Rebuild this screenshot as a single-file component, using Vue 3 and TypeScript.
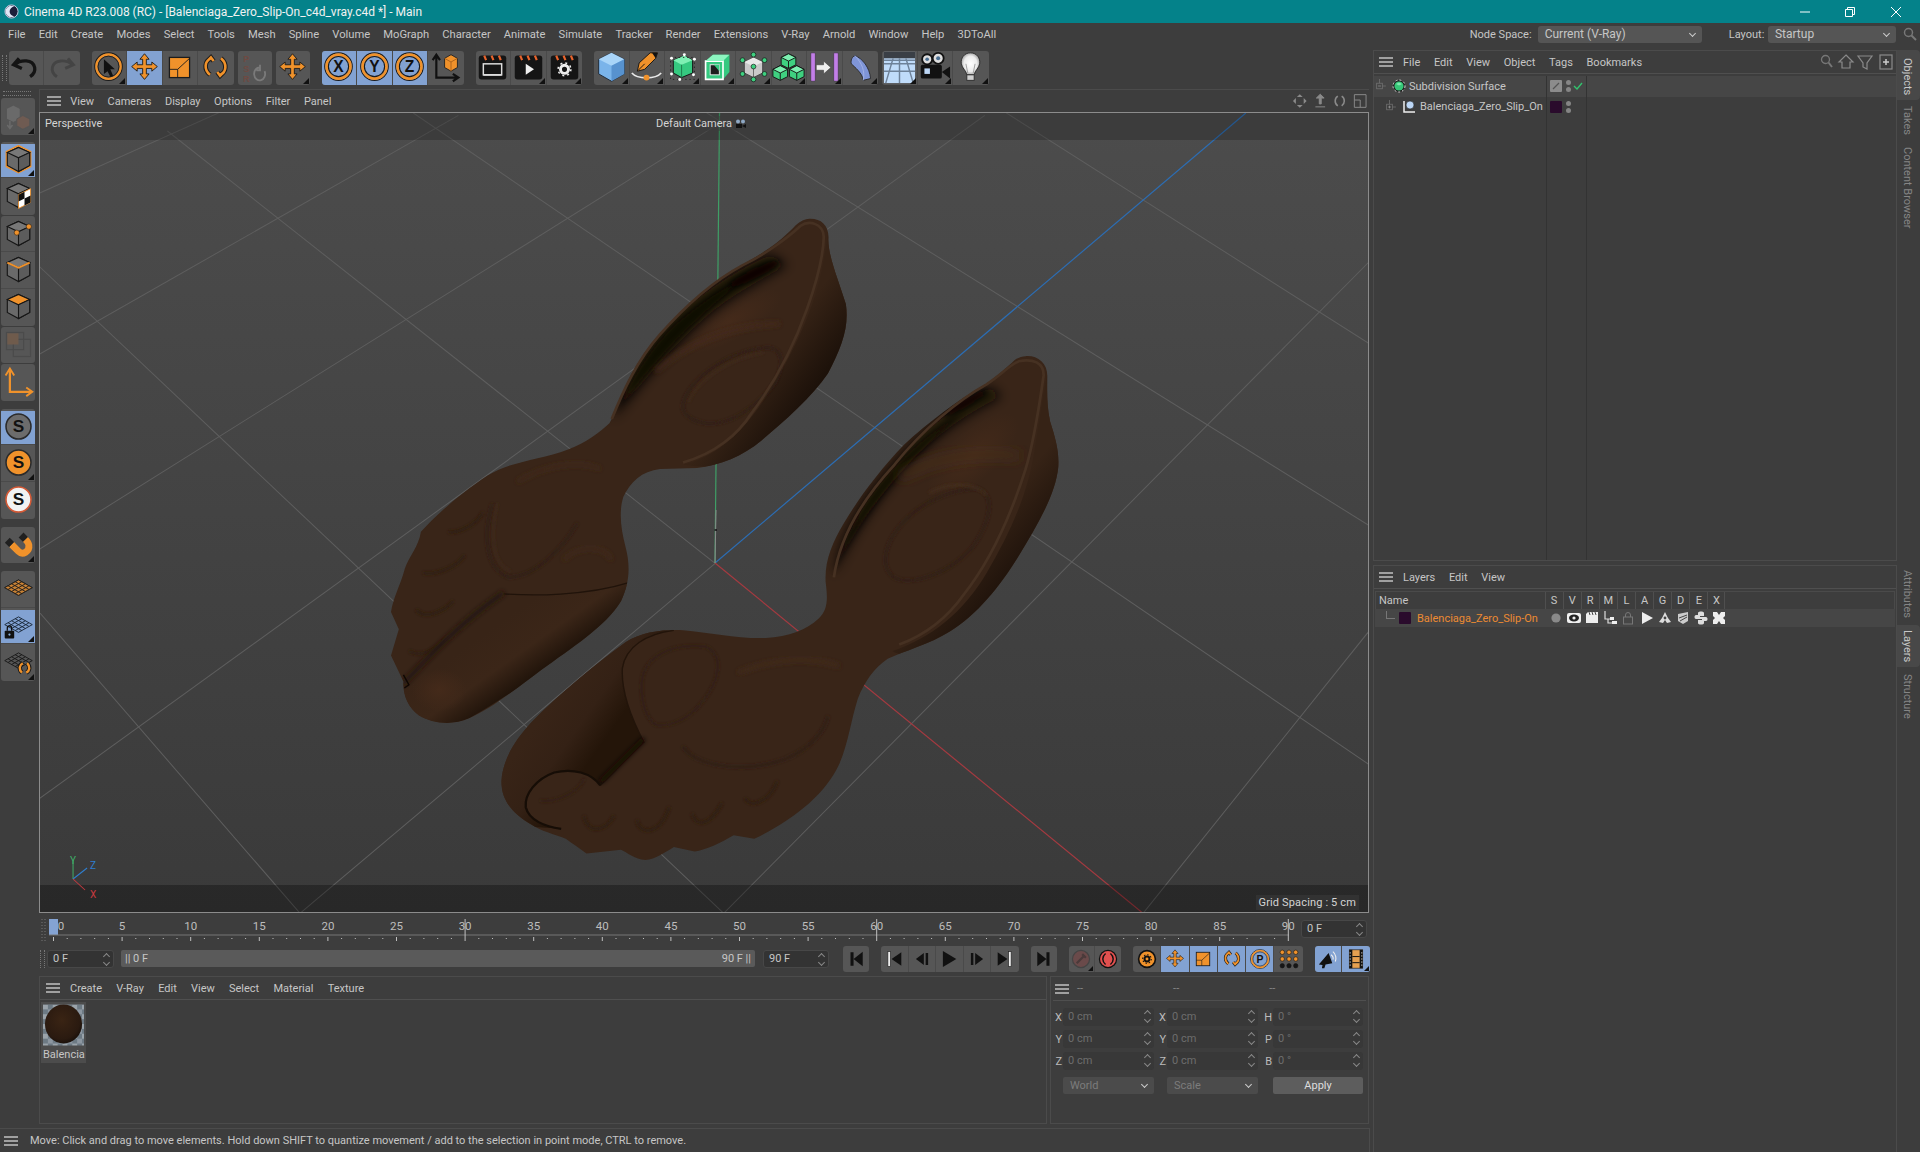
<template>
  <div class="app">
    <!-- title bar -->
    <div class="title">
      <svg class="logo" viewBox="0 0 16 16">
        <circle cx="8" cy="8" r="7" fill="#1c1f3a" stroke="#c9d2e8" stroke-width="1" />
        <path d="M11 3 A6 6 0 1 0 11 13 A4.5 4.5 0 1 1 11 3 Z" fill="#dfe6f5" />
      </svg>
      <span>Cinema 4D R23.008 (RC) - [Balenciaga_Zero_Slip-On_c4d_vray.c4d *] - Main</span>
      <div class="spacer"></div>
      <svg class="win w-min" viewBox="0 0 12 12"><path d="M1 6 H11" stroke="#fff" /></svg>
      <svg class="win w-max" viewBox="0 0 12 12"><path d="M1.5 3.5 H8.5 V10.5 H1.5 Z M3.5 3.5 V1.5 H10.5 V8.5 H8.5" stroke="#fff" fill="none" /></svg>
      <svg class="win w-close" viewBox="0 0 12 12"><path d="M1 1 L11 11 M11 1 L1 11" stroke="#fff" /></svg>
    </div>

    <!-- main menu -->
    <div class="menu">
      <span v-for="m in mainMenu" :key="m">{{ m }}</span>
      <div class="spacer"></div>
      <label class="lbl-node">Node Space:</label>
      <div class="select sel-node">Current (V-Ray)<i class="chev"></i></div>
      <label class="lbl-layout">Layout:</label>
      <div class="select sel-layout">Startup<i class="chev"></i></div>
      <svg class="ic14 menu-search" viewBox="0 0 14 14"><circle cx="5.5" cy="5.5" r="4" fill="none" stroke="#777" stroke-width="1.5" /><path d="M8.5 8.5 L13 13" stroke="#777" stroke-width="2" /></svg>
    </div>

    <div class="body">
      <div class="left">
        <!-- top toolbar -->
        <div class="toolbar">
          <i class="grip"></i>
          <div v-for="(g, i) in topTools" :key="i" class="group" :class="{ far: g.far }">
            <div v-for="t in g.items" :key="t.n" class="btn" :class="{ on: t.on, tri: t.tri }">
              <svg viewBox="0 0 36 36" v-html="icons[t.n]"></svg>
            </div>
          </div>
        </div>

        <div class="middle">
          <!-- left toolbar -->
          <div class="side">
            <i class="grip-h"></i>
            <div v-for="(g, i) in sideTools" :key="i" class="vgroup" :class="{ far: g.far }">
              <div v-for="t in g.items" :key="t.n" class="vbtn" :class="{ on: t.on, tri: t.tri }">
                <svg viewBox="0 0 36 36" v-html="icons[t.n]"></svg>
              </div>
            </div>
          </div>

          <div class="center">
            <div class="vp-bar">
              <div class="burger"><i></i><i></i><i></i></div>
              <span v-for="m in viewMenu" :key="m">{{ m }}</span>
              <div class="spacer"></div>
              <svg class="vp-nav" viewBox="0 0 78 16">
                <path d="M8 1 L11 4 H5 Z M8 15 L5 12 H11 Z M1 8 L4 5 V11 Z M15 8 L12 11 V5 Z" fill="#8a8a8a" />
                <path d="M29 1 L33 5 H30 V11 H28 V5 H25 Z M24 14 H34" fill="#8a8a8a" stroke="#8a8a8a" />
                <path d="M47 3 A6 6 0 0 0 47 13 M51 3 A6 6 0 0 1 51 13" fill="none" stroke="#8a8a8a" stroke-width="1.6" />
                <path d="M64 1.5 H76 V14.5 H64 Z M64 7 H70 V14.5" fill="none" stroke="#8a8a8a" />
              </svg>
            </div>

            <!-- 3d viewport -->
            <div class="viewport">
              <svg class="scene" viewBox="41 113 1326 799" preserveAspectRatio="none">
                <defs>
                  <linearGradient id="bg" x1="0" y1="0" x2="0" y2="1">
                    <stop offset="0" stop-color="#4c4c4c" />
                    <stop offset="1" stop-color="#3a3a3a" />
                  </linearGradient>
                  <linearGradient id="wallA" gradientUnits="userSpaceOnUse" x1="830" y1="390" x2="960" y2="480">
                    <stop offset="0" stop-color="#362316" />
                    <stop offset="1" stop-color="#150c06" />
                  </linearGradient>
                  <linearGradient id="wallB" gradientUnits="userSpaceOnUse" x1="1300" y1="770" x2="1430" y2="870">
                    <stop offset="0" stop-color="#362316" />
                    <stop offset="1" stop-color="#170d07" />
                  </linearGradient>
                  <linearGradient id="toeA" gradientUnits="userSpaceOnUse" x1="240" y1="990" x2="330" y2="1110">
                    <stop offset="0" stop-color="#382417" />
                    <stop offset=".55" stop-color="#3b2618" />
                    <stop offset="1" stop-color="#1e1209" />
                  </linearGradient>
                  <linearGradient id="coverB" gradientUnits="userSpaceOnUse" x1="520" y1="1200" x2="400" y2="1120">
                    <stop offset="0" stop-color="#241509" />
                    <stop offset=".45" stop-color="#342115" />
                    <stop offset="1" stop-color="#382417" />
                  </linearGradient>
                  <radialGradient id="glowA" cx=".5" cy=".5" r=".5">
                    <stop offset="0" stop-color="#442a1a" />
                    <stop offset="1" stop-color="#442a1a" stop-opacity="0" />
                  </radialGradient>
                  <filter id="b2" x="-30%" y="-30%" width="160%" height="160%"><feGaussianBlur stdDeviation="3.5" /></filter>
                  <filter id="b5" x="-30%" y="-30%" width="160%" height="160%"><feGaussianBlur stdDeviation="6" /></filter>
                  <filter id="b12" x="-40%" y="-40%" width="180%" height="180%"><feGaussianBlur stdDeviation="14" /></filter>
                  <clipPath id="clipA"><path :d="shoeA" /></clipPath>
                  <clipPath id="clipB"><path :d="shoeB" /></clipPath>
                </defs>

                <rect x="41" y="113" width="1326" height="799" fill="url(#bg)" />

                <!-- grid, coordinates taken from the zoomed view -->
                <g transform="translate(40 105) scale(.8546 .5198)">
                  <path v-for="(d, i) in grid" :key="i" :d="d" class="gridline" />
                </g>

                <!-- axes -->
                <path d="M715 563 L1245 113" stroke="#2c6db3" stroke-width="1.2" />
                <path d="M715 563 L1142 913" stroke="#a53a40" stroke-width="1.2" />
                <path d="M715 563 L719.5 113" stroke="#3f9f66" stroke-width="1.2" />
                <path d="M715 563 L716 510" stroke="#8a8a8a" stroke-width="1" />

                <!-- shoes -->
                <g transform="translate(380 200) scale(.4592 .4337)">
                  <!-- shoe A -->
                  <path :d="shoeA" fill="#392518" />
                  <g clip-path="url(#clipA)">
                    <ellipse cx="760" cy="280" rx="130" ry="45" transform="rotate(-30 760 280)" fill="url(#glowA)" />
                    <path d="M976 70 C975 130 1000 190 1030 240 C1030 340 960 470 830 570 C790 600 720 625 660 610 C740 590 790 530 830 470 C880 390 930 290 955 190 C965 150 970 110 976 70 Z" fill="url(#wallA)" />
                    <path d="M505 510 C530 430 575 345 640 275 C700 215 770 165 850 125 L885 150 C840 180 770 215 710 270 C640 335 570 420 505 510 Z" fill="#0f0804" filter="url(#b12)" />
                    <path d="M515 490 C545 420 585 345 645 285 C700 235 750 200 800 175 C740 230 640 310 515 490 Z" fill="#0d0703" opacity=".7" filter="url(#b5)" />
                    <ellipse cx="815" cy="170" rx="62" ry="11" transform="rotate(-28 815 170)" fill="#080402" filter="url(#b5)" />
                    <path d="M600 395 C680 320 770 290 870 285" fill="none" stroke="#442a1a" stroke-width="9" filter="url(#b5)" />
                    <path d="M660 470 C670 420 750 350 840 340 C880 340 880 380 860 420 C820 480 760 520 710 515 C680 510 655 495 660 470 Z" fill="none" stroke="#2f1e12" stroke-width="5" filter="url(#b2)" />
                    <path d="M672 465 C685 425 750 365 835 352" fill="none" stroke="#412b1c" stroke-width="4" filter="url(#b2)" />
                    <path d="M245 700 C225 770 230 850 280 870 C340 870 400 800 430 745" fill="none" stroke="#2f1e12" stroke-width="5" filter="url(#b2)" />
                    <path d="M256 700 C240 770 245 840 285 856" fill="none" stroke="#412b1c" stroke-width="3" filter="url(#b2)" />
                    <path d="M300 650 C360 610 430 600 480 620" fill="none" stroke="#422a1a" stroke-width="6" filter="url(#b5)" />
                    <path d="M400 830 C440 790 490 800 505 830" fill="none" stroke="#422a1a" stroke-width="6" filter="url(#b5)" />
                    <path v-for="(d, i) in toesA" :key="i" :d="d" fill="none" stroke="#2e1d11" stroke-width="6" filter="url(#b2)" />
                    <path d="M270 910 C330 915 450 915 540 885 C535 920 510 960 470 1000 C400 1055 300 1130 195 1195 C160 1212 115 1208 85 1188 C62 1170 50 1140 55 1122 C90 1080 150 1000 270 910 Z" fill="url(#toeA)" />
                    <ellipse cx="130" cy="1130" rx="60" ry="50" fill="url(#glowA)" />
                    <path d="M270 908 C330 913 450 913 540 883" fill="none" stroke="#20130a" stroke-width="3" />
                    <path d="M270 905 C150 995 90 1075 50 1117" fill="none" stroke="#24160c" stroke-width="10" filter="url(#b5)" />
                    <path d="M52 1095 L64 1118 L54 1125" fill="none" stroke="#0e0703" stroke-width="3" />
                  </g>
                  <path d="M505 505 C530 440 560 370 610 310 C660 250 720 190 790 150 C840 125 890 85 915 60 C935 45 965 55 966 85 C965 130 950 190 930 250 C900 340 860 420 810 490 C780 540 730 585 660 605" fill="none" stroke="#463122" stroke-width="6" />

                  <!-- shoe B -->
                  <path :d="shoeB" fill="#392518" />
                  <g clip-path="url(#clipB)">
                    <ellipse cx="1290" cy="590" rx="130" ry="55" transform="rotate(-45 1290 590)" fill="url(#glowA)" />
                    <path d="M1452 400 C1450 470 1470 550 1500 600 C1480 720 1400 880 1260 1000 C1200 1040 1140 1060 1115 1040 C1200 1010 1270 950 1320 860 C1370 770 1410 680 1425 570 C1435 510 1442 450 1452 400 Z" fill="url(#wallB)" />
                    <path d="M985 870 C1000 780 1050 690 1120 610 C1180 530 1260 470 1330 430 L1350 455 C1280 490 1200 550 1150 610 C1090 680 1030 760 985 870 Z" fill="#0f0804" filter="url(#b12)" />
                    <path d="M988 860 C1005 780 1055 690 1125 610 C1170 560 1220 520 1270 490 C1190 560 1070 680 988 860 Z" fill="#0d0703" opacity=".7" filter="url(#b5)" />
                    <ellipse cx="1275" cy="468" rx="58" ry="8" transform="rotate(-32 1275 468)" fill="#080402" filter="url(#b5)" />
                    <path d="M1130 640 C1210 590 1300 580 1390 590" fill="none" stroke="#472d1b" stroke-width="16" filter="url(#b12)" />
                    <path d="M1100 830 C1100 760 1190 670 1300 665 C1340 680 1330 740 1290 800 C1240 860 1170 885 1130 875 C1110 870 1100 850 1100 830 Z" fill="none" stroke="#2f1e12" stroke-width="5" filter="url(#b2)" />
                    <path d="M1195 675 C1240 650 1290 650 1320 680" fill="none" stroke="#442d1c" stroke-width="5" filter="url(#b2)" />
                    <path d="M570 1120 C570 1050 640 1020 710 1030 C750 1050 740 1110 700 1160 C670 1200 630 1215 600 1210 C575 1190 570 1150 570 1120 Z" fill="none" stroke="#2f1e12" stroke-width="4" filter="url(#b2)" />
                    <path d="M660 1260 C690 1310 800 1320 880 1290 C940 1265 970 1220 975 1190" fill="none" stroke="#2f1e12" stroke-width="6" filter="url(#b2)" />
                    <path d="M780 1090 C850 1060 930 1050 1000 1075" fill="none" stroke="#422a1a" stroke-width="8" filter="url(#b5)" />
                    <path v-for="(d, i) in toesB" :key="i" :d="d" fill="none" stroke="#2e1d11" stroke-width="6" filter="url(#b2)" />
                    <path d="M640 990 C580 998 535 1030 528 1080 C525 1140 550 1200 575 1250 L480 1350 C460 1320 420 1310 380 1320 C340 1335 315 1370 318 1400 C325 1430 360 1445 395 1450 L260 1440 L230 1250 L480 1000 Z" fill="url(#coverB)" />
                    <path d="M640 992 C580 1000 535 1030 528 1080 C525 1140 550 1200 575 1250 L480 1350" fill="none" stroke="#22140a" stroke-width="3" />
                    <path d="M585 1250 L490 1350" fill="none" stroke="#140b05" stroke-width="10" filter="url(#b5)" transform="translate(-10 -8)" />
                    <path d="M480 1350 C460 1320 420 1310 380 1320 C340 1335 315 1370 318 1400 C325 1430 360 1445 395 1450" fill="none" stroke="#160d06" stroke-width="5" />
                    <path d="M350 1385 C380 1390 430 1370 445 1335" fill="none" stroke="#2f1e12" stroke-width="4" filter="url(#b2)" />
                  </g>
                  <path d="M988 870 C1000 780 1050 690 1120 610 C1180 530 1260 460 1320 425 C1350 405 1370 380 1390 372 C1420 365 1445 375 1444 405 C1435 470 1425 550 1405 620 C1375 720 1330 830 1270 910 C1230 970 1180 1005 1130 1025" fill="none" stroke="#463122" stroke-width="6" />
                </g>

                <path d="M714.5 530 H717" stroke="#111" stroke-width="1.5" />
                <rect x="41" y="113" width="1326" height="27" fill="#000" opacity=".2" />
                <rect x="41" y="885" width="1326" height="27" fill="#000" opacity=".3" />

                <!-- axis gizmo -->
                <path d="M74 879 V860" stroke="#3fae68" />
                <path d="M74 879 L88 868" stroke="#2f7fd0" />
                <path d="M74 879 L86 890" stroke="#c93a40" />
              </svg>
              <span class="vp-tag tag-persp">Perspective</span>
              <span class="vp-tag tag-cam">Default Camera <svg class="cam-mini" viewBox="0 0 12 10"><circle cx="4" cy="2.5" r="2" fill="#8ea8c4" /><circle cx="9" cy="2.5" r="2" fill="#8ea8c4" /><rect x="2" y="5" width="6" height="4" fill="#111" /><path d="M8 7 L12 5 V9 Z" fill="#111" /></svg></span>
              <span class="vp-tag tag-grid">Grid Spacing : 5 cm</span>
              <span class="giz giz-y">Y</span>
              <span class="giz giz-z">Z</span>
              <span class="giz giz-x">X</span>
            </div>

            <!-- timeline ruler -->
            <div class="ruler-row">
              <svg class="ruler" viewBox="40 0 1262 33">
                <path d="M43 6 V30 M46 6 V30" stroke="#777" stroke-dasharray="1 2" />
                <rect x="50" y="6" width="9" height="16" fill="#84a3d3" />
                <path d="M50 22 H1290" stroke="#777" />
                <path v-for="t in ticks" :key="t.f" :d="t.d" stroke="#c0c0c0" />
                <text v-for="t in rulerLabels" :key="t.f" :x="t.x" y="17" text-anchor="middle" class="ruler-num">{{ t.f }}</text>
              </svg>
              <div class="field fld-end">0 F<i class="spin"></i></div>
            </div>

            <!-- timeline controls -->
            <div class="ctrl-row">
              <i class="grip grip-ctl"></i>
              <div class="field fld-start">0 F<i class="spin"></i></div>
              <div class="range"><span>|| 0 F</span><span>90 F ||</span></div>
              <div class="field fld-stop">90 F<i class="spin"></i></div>
              <div v-for="(g, i) in transport" :key="i" class="group tgroup" :class="g.cls">
                <div v-for="t in g.items" :key="t.n" class="tbtn" :class="{ on: t.on, tri: t.tri }">
                  <svg viewBox="0 0 36 36" v-html="icons[t.n]"></svg>
                </div>
              </div>
            </div>

            <div class="bottom">
              <!-- material manager -->
              <div class="materials panel">
                <div class="pbar">
                  <div class="burger"><i></i><i></i><i></i></div>
                  <span v-for="m in matMenu" :key="m">{{ m }}</span>
                </div>
                <div class="mat-body">
                  <div class="mat">
                    <svg viewBox="0 0 42 42" class="mat-thumb">
                      <defs>
                        <pattern id="chk" width="10" height="10" patternUnits="userSpaceOnUse">
                          <rect width="10" height="10" fill="#6d7a84" />
                          <rect width="5" height="5" fill="#9aa3aa" />
                          <rect x="5" y="5" width="5" height="5" fill="#8c96a0" />
                        </pattern>
                        <radialGradient id="ball" cx=".45" cy=".4" r=".65">
                          <stop offset="0" stop-color="#3a2414" />
                          <stop offset=".75" stop-color="#2a1a10" />
                          <stop offset="1" stop-color="#140d08" />
                        </radialGradient>
                      </defs>
                      <rect width="42" height="42" fill="url(#chk)" />
                      <ellipse cx="21" cy="20" rx="19" ry="20" fill="url(#ball)" />
                    </svg>
                    <span class="mat-name">Balencia</span>
                  </div>
                </div>
              </div>

              <!-- coordinates -->
              <div class="coords panel">
                <div class="pbar cbar">
                  <div class="burger"><i></i><i></i><i></i></div>
                  <span>--</span><span>--</span><span>--</span>
                </div>
                <div class="cgrid">
                  <template v-for="r in coordRows" :key="r[0]">
                    <label>{{ r[0] }}</label><div class="cfield">0 cm<i class="spin"></i></div>
                    <label>{{ r[1] }}</label><div class="cfield">0 cm<i class="spin"></i></div>
                    <label>{{ r[2] }}</label><div class="cfield">0 °<i class="spin"></i></div>
                  </template>
                  <span></span><div class="cdrop">World<i class="chev"></i></div>
                  <span></span><div class="cdrop">Scale<i class="chev"></i></div>
                  <span></span><div class="apply">Apply</div>
                </div>
              </div>
            </div>
          </div>
        </div>

        <div class="status">
          <div class="burger"><i></i><i></i><i></i></div>
          <span>Move: Click and drag to move elements. Hold down SHIFT to quantize movement / add to the selection in point mode, CTRL to remove.</span>
        </div>
      </div>

      <!-- right side -->
      <div class="right">
        <div class="docks">
          <div class="objects panel">
            <div class="pbar rbar">
              <div class="burger"><i></i><i></i><i></i></div>
              <span v-for="m in objMenu" :key="m">{{ m }}</span>
              <div class="spacer"></div>
              <svg class="obj-tools" viewBox="0 0 74 16">
                <circle cx="5.5" cy="5.5" r="4" fill="none" stroke="#777" stroke-width="1.3" />
                <path d="M8.5 8.5 L12 13" stroke="#777" stroke-width="2" />
                <path d="M26 1 L33 8 H30 V14 H22 V8 H19 Z" fill="none" stroke="#8a8a8a" stroke-width="1.2" />
                <path d="M38 2 H52 L47 9 V15 L43 13 V9 Z" fill="none" stroke="#8a8a8a" stroke-width="1.2" />
                <rect x="60" y="1" width="12" height="14" fill="none" stroke="#8a8a8a" stroke-width="1.2" />
                <path d="M63 8 H69 M66 5 V11" stroke="#ccc" stroke-width="1.5" />
              </svg>
            </div>
            <div class="obj-table">
              <div class="obj-row sel">
                <div class="obj-name">
                  <svg class="tree" viewBox="0 0 20 20"><path d="M5 0 V6 M9 10 H14" stroke="#777" fill="none" /><rect x="1" y="6" width="8" height="8" fill="none" stroke="#777" /><path d="M3 10 H7" stroke="#999" /></svg>
                  <svg class="ic14" viewBox="0 0 14 14"><circle cx="7" cy="7" r="6" fill="#1c1c1c" stroke="#ddd" stroke-dasharray="2 2" /><circle cx="7" cy="7" r="4.6" fill="#36c777" /><path d="M4 5 L7 3.5 L10 5 L7 6.5 Z" fill="#7eeaaf" /></svg>
                  <span class="obj-label">Subdivision Surface</span>
                </div>
                <div class="obj-flags">
                  <i class="tagbox"><svg viewBox="0 0 12 12"><path d="M3 9 L9 3" stroke="#555" stroke-width="1.2" /></svg></i>
                  <i class="dots"><b></b><b></b></i>
                  <svg class="check" viewBox="0 0 10 8"><path d="M1 4 L4 7 L9 1" stroke="#32c36e" stroke-width="1.4" fill="none" /></svg>
                </div>
              </div>
              <div class="obj-row">
                <div class="obj-name child">
                  <svg class="tree" viewBox="0 0 20 20"><path d="M5 0 V6 M9 10 H14" stroke="#777" fill="none" /><rect x="1" y="6" width="8" height="8" fill="none" stroke="#777" /><path d="M3 10 H7 M5 8 V12" stroke="#999" /></svg>
                  <svg class="ic14" viewBox="0 0 14 14"><path d="M2 1 V12 H13" stroke="#eee" stroke-width="1.5" fill="none" /><circle cx="8" cy="5" r="4" fill="#bcd6f5" stroke="#222" stroke-width=".6" /></svg>
                  <span class="obj-label">Balenciaga_Zero_Slip_On</span>
                </div>
                <div class="obj-flags">
                  <i class="tagbox purple"></i>
                  <i class="dots"><b></b><b></b></i>
                </div>
              </div>
              <div class="obj-rest"><i></i><i></i></div>
            </div>
          </div>

          <div class="layers panel">
            <div class="pbar rbar">
              <div class="burger"><i></i><i></i><i></i></div>
              <span v-for="m in layerMenu" :key="m">{{ m }}</span>
            </div>
            <div class="layer-table">
              <div class="layer-head">
                <span class="lh-name">Name</span>
                <span v-for="c in layerCols" :key="c" class="lh-col">{{ c }}</span>
              </div>
              <div class="layer-row">
                <div class="lr-name">
                  <i class="lr-tree"></i>
                  <i class="tagbox purple lr-box"></i>
                  <span>Balenciaga_Zero_Slip-On</span>
                </div>
                <svg v-for="c in layerIcons" :key="c" class="lr-ic" viewBox="0 0 14 14" v-html="c"></svg>
              </div>
            </div>
          </div>
        </div>

        <div class="tabs">
          <div class="tab-block">
            <span class="tab on tab-obj">Objects</span>
            <span class="tab">Takes</span>
            <span class="tab">Content Browser</span>
          </div>
          <div class="tab-block lower">
            <span class="tab">Attributes</span>
            <span class="tab on">Layers</span>
            <span class="tab">Structure</span>
          </div>
        </div>
      </div>
    </div>
  </div>
</template>

<script setup lang="ts">
type Tool = { n: string; on?: boolean; tri?: boolean }
type Group = { items: Tool[]; far?: boolean; cls?: string }

const mainMenu = ['File', 'Edit', 'Create', 'Modes', 'Select', 'Tools', 'Mesh', 'Spline', 'Volume', 'MoGraph', 'Character', 'Animate', 'Simulate', 'Tracker', 'Render', 'Extensions', 'V-Ray', 'Arnold', 'Window', 'Help', '3DToAll']
const viewMenu = ['View', 'Cameras', 'Display', 'Options', 'Filter', 'Panel']
const matMenu = ['Create', 'V-Ray', 'Edit', 'View', 'Select', 'Material', 'Texture']
const objMenu = ['File', 'Edit', 'View', 'Object', 'Tags', 'Bookmarks']
const layerMenu = ['Layers', 'Edit', 'View']
const layerCols = ['S', 'V', 'R', 'M', 'L', 'A', 'G', 'D', 'E', 'X']
const coordRows = [['X', 'X', 'H'], ['Y', 'Y', 'P'], ['Z', 'Z', 'B']]

const OR = '#f0922b'
const DK = '#1c1c1c'

// outlined stroke, dark under orange
const line2 = (d: string, c = OR) =>
  `<path d="${d}" fill="none" stroke="${DK}" stroke-width="5"/><path d="${d}" fill="none" stroke="${c}" stroke-width="2.8"/>`

const cross = `<path d="M18 3 L23 9 H20 V15 H26 V12 L32 17 L26 22 V19 H20 V25 H23 L18 31 L13 25 H16 V19 H10 V22 L4 17 L10 12 V15 H16 V9 H13 Z" fill="${OR}" stroke="${DK}"/>`
const scale = `<rect x="7" y="7" width="22" height="22" fill="${OR}" stroke="${DK}" stroke-width="1.4"/><path d="M7 20 H16 L29 8 M16 20 V29" stroke="${DK}" fill="none"/>`
const rotate = line2('M12 26 C5 20 6 11 13 8 M9 11 L13 7 L16 11') + line2('M24 8 C31 14 30 23 23 26 M27 23 L23 27 L20 23')
const axisLetter = (l: string) =>
  `<circle cx="18" cy="17" r="15" fill="none" stroke="${DK}" stroke-width="1.3"/><circle cx="18" cy="17" r="13" fill="none" stroke="${OR}" stroke-width="3"/><circle cx="18" cy="17" r="11" fill="none" stroke="${DK}" stroke-width="1.2"/><text x="18" y="23" text-anchor="middle" font-family="Liberation Sans, sans-serif" font-weight="700" font-size="17" fill="#111">${l}</text>`
const clapper = (inner: string) =>
  `<rect x="3" y="5" width="30" height="26" rx="3" fill="#151515"/><path d="M9 5 L11 10 M17 5 L19 10 M25 5 L27 10" stroke="#e8632c" stroke-width="2.4"/>${inner}`
const cubeBase = (top = '#787878', l = '#6a6a6a', r = '#5c5c5c', st = '#161616') =>
  `<path d="M18 4 L31 10 V25 L18 32 L5 25 V10 Z" fill="${l}" stroke="${st}" stroke-width="1.3"/><path d="M5 10 L18 16 L31 10 L18 4 Z" fill="${top}" stroke="${st}" stroke-width="1.3"/><path d="M18 16 V32 L31 25 V10 Z" fill="${r}" stroke="${st}" stroke-width="1.3"/>`
const sphereS = (bg: string, ring: string) =>
  `<circle cx="18" cy="18" r="14.5" fill="${bg}" stroke="${ring}" stroke-width="1.8"/><text x="18" y="24.5" text-anchor="middle" font-family="Liberation Sans, sans-serif" font-weight="700" font-size="20" fill="#111">S</text>`
const gridDiamond = (c: string) =>
  `<path d="M18 8 L34 17 L18 26 L2 17 Z M10 12.5 L26 21.5 M14 10 L30 19 M6 15 L22 24 M26 12.5 L10 21.5 M22 10 L6 19 M30 15 L14 24" fill="none" stroke="${c}" stroke-width="1.1"/>`
const gcube = (x: number, y: number, s = 8) =>
  `<path d="M${x} ${y - s} L${x + s} ${y - s / 2} V${y + s / 2} L${x} ${y + s} L${x - s} ${y + s / 2} V${y - s / 2} Z" fill="#3fd080" stroke="#111"/><path d="M${x - s} ${y - s / 2} L${x} ${y} L${x + s} ${y - s / 2} L${x} ${y - s} Z" fill="#7cf0b0" stroke="#111"/><path d="M${x} ${y} V${y + s}" stroke="#111"/>`
const gdot = (x: number, y: number) => `<circle cx="${x}" cy="${y}" r="2.6" fill="#3fd080" stroke="#111" stroke-width=".7"/>`

const icons: Record<string, string> = {
  undo: `<path d="M11 8 L5 15 L14 19 M6 15 C13 9 26 9 28 18 C29 23 26 26 23 28" fill="none" stroke="#141414" stroke-width="3.6"/>`,
  redo: `<path d="M25 8 L31 15 L22 19 M30 15 C23 9 10 9 8 18 C7 23 10 26 13 28" fill="none" stroke="#444" stroke-width="3.2"/>`,
  select: `<circle cx="18" cy="17" r="15" fill="none" stroke="${DK}" stroke-width="1.2"/><circle cx="18" cy="17" r="13.2" fill="none" stroke="${OR}" stroke-width="2.6"/><circle cx="18" cy="17" r="11.4" fill="none" stroke="${DK}"/><path d="M13 9 L25 20 H20 L23 27 L20 28 L17 22 L13 25 Z" fill="#111"/>`,
  move: cross,
  scale,
  rotate,
  psr: `<text x="9" y="12" text-anchor="middle" font-family="Liberation Sans, sans-serif" font-size="10" font-weight="700" fill="#6e4a42">P</text><text x="9" y="23" text-anchor="middle" font-family="Liberation Sans, sans-serif" font-size="10" font-weight="700" fill="#6e4a42">S</text><text x="9" y="34" text-anchor="middle" font-family="Liberation Sans, sans-serif" font-size="10" font-weight="700" fill="#6e4a42">R</text><path d="M29 22 A6 7 0 1 1 24 18 M24 15 V21 H20" fill="none" stroke="#7a7a7a" stroke-width="2"/>`,
  cross2: cross,
  x: axisLetter('X'),
  y: axisLetter('Y'),
  z: axisLetter('Z'),
  coords: `<path d="M8 5 V29 H31 M4 10 L8 4 L12 10 M26 25 L32 29 L26 33" fill="none" stroke="#111" stroke-width="2.4"/><path d="M17 8 L24 4 L31 8 V18 L24 22 L17 18 Z" fill="${OR}" stroke="#222"/><path d="M17 8 L24 12 L31 8 M24 12 V22" fill="none" stroke="#a9601a"/>`,
  clapFrame: clapper('<rect x="8" y="14" width="20" height="12" fill="none" stroke="#ddd" stroke-width="1.6"/><path d="M8 26 H28" stroke="#ddd" stroke-width="2"/>'),
  clapPlay: clapper('<path d="M15 14 L24 20 L15 26 Z" fill="#eee"/>'),
  clapGear: clapper('<circle cx="18" cy="20" r="4.4" fill="none" stroke="#eee" stroke-width="3.2"/><circle cx="18" cy="20" r="7" fill="none" stroke="#eee" stroke-width="1.6" stroke-dasharray="2.2 3.3"/>'),
  blueCube: `<path d="M18 2 L32 9 V25 L18 33 L4 25 V9 Z" fill="#7ab4ea" stroke="#1c2530" stroke-width="1"/><path d="M4 9 L18 16 L32 9 L18 2 Z" fill="#a8d4f8"/><path d="M18 16 V33 L32 25 V9 Z" fill="#5792cf"/>`,
  pen: `<path d="M30 2 L22 2 L10 13 L8 22 L16 20 L28 8 Z" fill="${OR}" stroke="#111"/><path d="M30 2 L24 2 L28 8 Z" fill="#111"/><path d="M9 21 L16 14" stroke="#111"/><path d="M2 24 C8 31 28 31 34 24" fill="none" stroke="#e8e8e8" stroke-width="1.8"/><circle cx="18" cy="29" r="3.2" fill="${OR}"/>`,
  nurbs: `<path d="M8 10 L20 5 L29 10 V24 L17 29 L8 24 Z" fill="#35c980" stroke="#111"/><path d="M8 10 L17 15 L29 10 L20 5 Z" fill="#7ef0b4"/><path d="M17 15 V29" stroke="#1a7a4a"/><path d="M5 7 H31 V31 H5 Z" fill="none" stroke="#222" stroke-dasharray="1.5 3"/><g fill="#fff"><circle cx="6" cy="8" r="1.6"/><circle cx="20" cy="4" r="1.6"/><circle cx="31" cy="9" r="1.6"/><circle cx="30" cy="26" r="1.6"/><circle cx="15" cy="31" r="1.6"/><circle cx="6" cy="25" r="1.6"/></g>`,
  extrude: `<path d="M5 11 L13 4 L31 4 L31 23 L24 31 H5 Z" fill="#35c980"/><path d="M5 11 H24 V31 H5 Z" fill="none" stroke="#fff" stroke-width="1.8"/><path d="M5 11 L13 4 H31 L24 11 Z" fill="#8cf5c0"/><rect x="10" y="15" width="10" height="11" fill="#1d1d1d" stroke="#eee"/><path d="M14 15 H20 V22 Z" fill="#35c980"/>`,
  cloner: `<path d="M18 7 L28 12 V24 L18 29 L8 24 V12 Z" fill="#c9c9c9" stroke="#444"/><path d="M8 12 L18 17 L28 12 L18 7 Z" fill="#e8e8e8"/><path d="M18 17 V29" stroke="#666"/>${gdot(18, 4)}${gdot(6, 10)}${gdot(30, 10)}${gdot(6, 25)}${gdot(30, 25)}${gdot(18, 31)}${gdot(18, 17)}`,
  mograph: gcube(18, 11) + gcube(9, 24) + gcube(27, 24),
  deform: `<rect x="3" y="2" width="5" height="31" rx="1" fill="#c27ee8" stroke="#2c2c2c" stroke-width=".6"/><rect x="28" y="2" width="5" height="31" rx="1" fill="#c27ee8" stroke="#2c2c2c" stroke-width=".6"/><path d="M9 15 H17 V11 L25 18 L17 25 V21 H9 Z" fill="#eee" stroke="#333" stroke-width=".6"/>`,
  bend: `<path d="M12 5 C20 8 28 18 29 30 L21 32 C20 24 12 18 8 14 C7 10 9 6 12 5 Z" fill="#7f95d8" stroke="#2a2a2a"/><path d="M21 32 C23 22 20 14 12 5" fill="none" stroke="#a4b4e6"/>`,
  floor: `<rect x="1" y="1" width="34" height="34" fill="#c0dcfa"/><rect x="1" y="1" width="34" height="7" fill="#3a3f46"/><path d="M1 10 H35 M1 14 H35 M1 22 H35 M11 8 L3 35 M18 8 V35 M25 8 L33 35" stroke="#6e8299" stroke-width="1.6" fill="none"/>`,
  camera: `<circle cx="10" cy="9" r="5.5" fill="#ddd" stroke="#111" stroke-width="2"/><circle cx="10" cy="9" r="2" fill="#4b6f92"/><circle cx="22" cy="8" r="6" fill="#ddd" stroke="#111" stroke-width="2"/><circle cx="22" cy="8" r="2.2" fill="#4b6f92"/><rect x="3" y="15" width="23" height="15" rx="2" fill="#111"/><rect x="7" y="19" width="6" height="6" fill="#bcd6f5"/><path d="M26 23 L35 17 V30 Z" fill="#111"/>`,
  light: `<defs><radialGradient id="bulbGlow"><stop offset="0" stop-color="#fff"/><stop offset=".7" stop-color="#ececec"/><stop offset="1" stop-color="#aaa"/></radialGradient></defs><path d="M18 2 C25 2 29 8 28 14 C27 19 23 21 22 26 H14 C13 21 9 19 8 14 C7 8 11 2 18 2 Z" fill="url(#bulbGlow)" stroke="#2c2c2c"/><path d="M15 24 L13 14 M21 24 L23 14" stroke="#9a9a9a" fill="none"/><rect x="14" y="26" width="8" height="6" fill="#d0d0d0" stroke="#2c2c2c"/>`,
  // left column
  nomodel: `<path d="M4 10 L12 6 L20 10 V22 L12 26 L4 22 Z" fill="#6a6a6a" stroke="#555"/><path d="M16 22 L23 18 L31 22 V30 L23 34 L16 30 Z" fill="#6f5b52" stroke="#555"/><path d="M8 24 V32 M5 29 L8 33 L11 29" stroke="#6a6a6a" fill="none" stroke-width="1.8"/>`,
  model: `<path d="M18 2 L32 9 V26 L18 33 L4 26 V9 Z" fill="none" stroke="${OR}" stroke-width="2"/>` + cubeBase(),
  texture: cubeBase() + `<path d="M18 17 L32 10 V26 L18 33 Z" fill="#fff" stroke="${OR}"/><g fill="#111"><path d="M18 17 L25 13.5 V21.5 L18 25 Z"/><path d="M25 21.5 L32 18 V26 L25 29.5 Z"/></g>`,
  points: cubeBase() + `<circle cx="16" cy="17" r="3" fill="${OR}" stroke="#111" stroke-width=".6"/><circle cx="30" cy="10" r="3" fill="${OR}" stroke="#111" stroke-width=".6"/>`,
  edges: cubeBase() + `<path d="M5 10 L18 16 L31 10" fill="none" stroke="${OR}" stroke-width="2"/>`,
  polys: cubeBase(OR),
  planes: `<rect x="4" y="4" width="20" height="20" fill="none" stroke="#4b4b4b" stroke-width="1.4"/><rect x="12" y="12" width="20" height="20" fill="none" stroke="#4b4b4b" stroke-width="1.4"/><rect x="5" y="5" width="13" height="13" fill="#6f5b4c"/>`,
  axis: `<path d="M8 5 V30 H33" fill="none" stroke="${OR}" stroke-width="2.6"/><path d="M3 11 L8 3 L13 11 M27 25 L34 30 L27 35" fill="none" stroke="${OR}" stroke-width="2.2"/>`,
  sGray: sphereS('#6c6c6c', '#2b2b2b'),
  sOrange: sphereS(OR, '#2b2b2b'),
  sWhite: sphereS('#f2f2f2', '#d55a36'),
  magnet: `<path d="M10 18 L18 26 C23 31 31 26 30 19 C30 16 28 14 26 12" fill="none" stroke="${OR}" stroke-width="8"/><path d="M5 13 L10 18 M21 7 L26 12" stroke="#202020" stroke-width="8" fill="none"/>`,
  gridOrange: gridDiamond('#141414') + `<path d="M18 8 L34 17 L18 26 L2 17 Z" fill="${OR}" opacity=".75"/>` + gridDiamond('#222'),
  gridLock: gridDiamond('#1c2a3c') + `<rect x="2" y="24" width="11" height="9" rx="1" fill="#111"/><path d="M5 24 V21 A2.5 2.5 0 0 1 10 21 V24" fill="none" stroke="#111" stroke-width="1.5"/><circle cx="7.5" cy="28.5" r="1.3" fill="#8bb0d8"/>`,
  gridSync: gridDiamond('#191919') + line2('M22 31 C18 27 19 22 23 20') + line2('M28 20 C32 24 31 29 27 31'),
  // transport
  first: `<path d="M9 7 H14 V29 H9 Z M29 6 V30 L14 18 Z" fill="#111"/>`,
  firstK: `<rect x="8" y="6" width="4" height="24" fill="#eee" stroke="#222"/><path d="M30 7 V29 L14 18 Z" fill="#111"/>`,
  prev: `<path d="M28 8 H24 V28 H28 Z M21 8 V28 L8 18 Z" fill="#111"/>`,
  play: `<path d="M8 5 L30 18 L8 31 Z" fill="#111"/>`,
  next: `<path d="M8 8 H12 V28 H8 Z M15 8 V28 L28 18 Z" fill="#111"/>`,
  lastK: `<path d="M6 7 V29 L22 18 Z" fill="#111"/><rect x="24" y="6" width="4" height="24" fill="#eee" stroke="#222"/>`,
  last: `<path d="M7 6 V30 L22 18 Z M22 7 H27 V29 H22 Z" fill="#111"/>`,
  keyDim: `<circle cx="18" cy="18" r="14" fill="#6a4a4a" stroke="#444" stroke-width="2"/><path d="M11 25 L22 14 M20 10 L26 16" stroke="#4a3a3a" stroke-width="3.6"/>`,
  record: `<circle cx="18" cy="18" r="15" fill="#111"/><circle cx="18" cy="18" r="13" fill="#e2504f"/><path d="M14 9 C8 14 8 22 14 27 M22 9 C28 14 28 22 22 27" fill="none" stroke="#111" stroke-width="2.4"/>`,
  autoGear: `<circle cx="18" cy="18" r="15" fill="#111"/><circle cx="18" cy="18" r="12.4" fill="${OR}"/><circle cx="18" cy="18" r="4" fill="none" stroke="#111" stroke-width="3.2"/><circle cx="18" cy="18" r="7" fill="none" stroke="#111" stroke-width="1.8" stroke-dasharray="2.4 3"/>`,
  tMove: cross,
  tScale: scale,
  tRotate: rotate,
  tP: `<circle cx="18" cy="18" r="15.5" fill="none" stroke="${DK}" stroke-width="1.2"/><circle cx="18" cy="18" r="13.6" fill="none" stroke="${OR}" stroke-width="2.8"/><circle cx="18" cy="18" r="11.6" fill="none" stroke="${DK}"/><text x="18" y="24" text-anchor="middle" font-family="Liberation Sans, sans-serif" font-weight="700" font-size="17" fill="#111">P</text>`,
  dotsK: [7, 18, 29].flatMap((y, r) => [7, 18, 29].map((x) => `<circle cx="${x}" cy="${y}" r="3.6" fill="${r < 2 ? OR : '#161616'}" stroke="#161616"/>`)).join(''),
  sound: `<path d="M3 27 L10 19 L19 8 L25 25 L14 27 L12 33 L8 33 L9 28 Z" fill="#111"/><path d="M23 11 C26 13 27 16 26 19 M26 6 C31 10 32 17 30 22" fill="none" stroke="#eee" stroke-width="1.8"/>`,
  film: `<rect x="7" y="3" width="22" height="30" fill="#e6a050" stroke="#111"/><rect x="7" y="3" width="5" height="30" fill="#111"/><rect x="24" y="3" width="5" height="30" fill="#111"/><path d="M12 14 H24 M12 24 H24" stroke="#111" stroke-width="1.6"/><path d="M8.5 7 V31 M27.5 7 V31" stroke="#ddd" stroke-width="1.6" stroke-dasharray="2 3"/>`,
}

const topTools: Group[] = [
  { items: [{ n: 'undo' }, { n: 'redo' }] },
  { far: true, items: [{ n: 'select', tri: true }, { n: 'move', on: true }, { n: 'scale' }, { n: 'rotate' }] },
  { items: [{ n: 'psr' }] },
  { items: [{ n: 'cross2', tri: true }] },
  { far: true, items: [{ n: 'x', on: true }, { n: 'y', on: true }, { n: 'z', on: true }, { n: 'coords' }] },
  { far: true, items: [{ n: 'clapFrame' }, { n: 'clapPlay', tri: true }, { n: 'clapGear', tri: true }] },
  { far: true, items: ['blueCube', 'pen', 'nurbs', 'extrude', 'cloner', 'mograph', 'deform', 'bend'].map((n) => ({ n, tri: true })) },
  { items: ['floor', 'camera', 'light'].map((n) => ({ n, tri: true })) },
]

const sideTools: Group[] = [
  { items: [{ n: 'nomodel', tri: true }] },
  { items: [{ n: 'model', on: true, tri: true }, { n: 'texture' }] },
  { items: [{ n: 'points' }, { n: 'edges' }, { n: 'polys' }] },
  { items: [{ n: 'planes' }] },
  { items: [{ n: 'axis' }] },
  { far: true, items: [{ n: 'sGray', on: true }, { n: 'sOrange', tri: true }, { n: 'sWhite' }] },
  { far: true, items: [{ n: 'magnet', tri: true }] },
  { far: true, items: [{ n: 'gridOrange' }, { n: 'gridLock', on: true, tri: true }, { n: 'gridSync', tri: true }] },
]

const transport: Group[] = [
  { cls: 'g-narrow', items: [{ n: 'first' }] },
  { cls: 'g-mid', items: [{ n: 'firstK' }, { n: 'prev' }, { n: 'play' }, { n: 'next' }, { n: 'lastK' }] },
  { cls: 'g-mid g-narrow', items: [{ n: 'last' }] },
  { cls: 'g-mid g-narrow', items: [{ n: 'keyDim', tri: true }, { n: 'record' }] },
  { cls: 'g-mid g-wide', items: [{ n: 'autoGear' }, { n: 'tMove', on: true }, { n: 'tScale', on: true }, { n: 'tRotate', on: true }, { n: 'tP', on: true }, { n: 'dotsK' }] },
  { cls: 'g-mid', items: [{ n: 'sound', on: true }, { n: 'film', on: true, tri: true }] },
]

// ruler: 13.72px per frame starting at x=54.5
const frameX = (f: number) => 54.5 + f * 13.72
const ticks = Array.from({ length: 91 }, (_, f) => {
  const x = frameX(f).toFixed(1)
  const big = f > 0 && f % 30 === 0
  return { f, d: big ? `M${x} 6 V28` : f % 5 === 0 ? `M${x} 24 V28` : `M${x} 25 V26` }
})
const rulerLabels = Array.from({ length: 19 }, (_, i) => {
  const f = i * 5
  return { f, x: f === 0 ? 62 : frameX(f) }
})

const layerIcons = [
  '<circle cx="7" cy="7" r="4.6" fill="#8a8a8a"/>',
  '<rect x="0" y="2" width="14" height="10" rx="2" fill="#f0f0f0"/><ellipse cx="7" cy="7" rx="5" ry="3.4" fill="#222"/><circle cx="7" cy="7" r="1.6" fill="#eee"/>',
  '<path d="M1 3 L3 1 H13 V12 H1 Z" fill="#eee"/><path d="M4 1 L5 4 M7 1 L8 4 M10 1 L11 4" stroke="#444"/>',
  '<path d="M2 0 V8 H8 M5 8 V12 H9" fill="none" stroke="#ddd" stroke-width="1.2"/><rect x="7" y="6" width="4" height="3" fill="#eee"/><rect x="9" y="10" width="5" height="3" fill="#eee"/>',
  '<rect x="2.5" y="6" width="9" height="7" fill="none" stroke="#777"/><path d="M4.5 6 V4 A2.5 2.5 0 0 1 9.5 4 V6" fill="none" stroke="#777"/>',
  '<path d="M2 1 L13 7 L2 13 Z" fill="#eee"/>',
  '<path d="M7 1 L10 7 L13 11 L9 12 L7 9 L5 12 L1 11 L4 7 Z" fill="#ddd"/><circle cx="7" cy="7" r="1.4" fill="#444"/>',
  '<path d="M2 3 L12 1 V10 L7 13 L2 10 Z" fill="#ccc"/><path d="M3 7 L11 4 M4 10 L11 6" stroke="#444"/>',
  '<path d="M4 2 C4 0 10 0 10 2 V5 H6 V6 H12 C14 6 14 10 12 10 H10 V12 C10 14 4 14 4 12 V9 H8 V8 H2 C0 8 0 4 2 4 H4 Z" fill="#ddd"/>',
  '<path d="M1 1 H5 L7 4 L9 1 H13 V5 L11 7 L13 9 V13 H9 L7 10 L5 13 H1 V9 L3 7 L1 5 Z" fill="#eee"/>',
]

// zoomed-view coordinates of the grid
const grid = [
  'M150 50 L790 882', 'M437 15 L1555 1270', 'M780 15 L1555 810', 'M1130 15 L1555 460',
  'M0 310 L800 1555', 'M0 975 L305 1555', 'M0 480 L490 20', 'M0 855 L800 30',
  'M0 1335 L1105 20', 'M800 1555 L1555 300', 'M1290 1555 L1555 1010', 'M0 170 L210 15',
  'M790 882 L305 1555',
]

const shoeA = 'M935 43 C960 42 978 58 976 90 C975 130 1000 190 1014 240 C1022 290 1005 340 975 400 C940 455 880 510 830 555 C790 590 740 612 690 618 L610 620 C570 625 545 650 530 685 C520 720 525 760 535 800 C545 840 545 880 525 925 C490 985 420 1030 350 1085 C300 1125 240 1175 195 1195 C160 1212 115 1208 85 1188 C62 1170 50 1140 52 1110 L25 1050 L42 990 L25 950 C30 915 45 890 55 850 C65 820 85 800 90 765 C120 730 170 680 235 635 C290 600 350 600 410 575 C450 560 480 535 500 515 C520 480 530 430 560 380 C590 330 640 270 700 215 C740 180 780 155 820 130 C860 105 890 75 905 58 C915 48 925 44 935 43 Z'
const shoeB = 'M1405 360 C1430 358 1452 375 1452 405 C1452 440 1450 470 1458 510 C1470 550 1478 580 1476 615 C1470 680 1430 750 1390 820 C1350 890 1300 955 1240 995 C1195 1025 1140 1040 1105 1058 C1075 1080 1055 1110 1040 1150 C1025 1200 1020 1250 1000 1300 C970 1370 900 1430 815 1473 L770 1465 C745 1480 710 1500 685 1502 L640 1492 C620 1505 600 1520 578 1522 C555 1520 540 1505 525 1498 L450 1507 C435 1495 420 1485 405 1473 C380 1462 350 1455 330 1440 C290 1415 265 1385 265 1340 C268 1290 295 1245 330 1205 C390 1140 470 1070 535 1020 C570 995 620 990 660 992 C720 998 780 1012 840 1010 C890 1008 930 990 955 965 C975 945 975 920 970 880 C968 830 985 790 1010 745 C1040 690 1090 620 1140 565 C1190 515 1260 460 1310 430 C1340 410 1365 385 1380 370 C1388 363 1397 360 1405 360 Z'
const toesA = [
  'M150 765 C170 770 210 750 225 720',
  'M95 860 C120 865 165 850 185 820',
  'M80 945 C95 965 135 955 160 925',
  'M65 1040 C85 1055 125 1040 145 1010',
]
const toesB = [
  'M445 1420 C450 1460 490 1460 510 1420',
  'M560 1430 C565 1465 610 1465 630 1400',
  'M680 1415 C690 1450 720 1440 745 1390',
  'M795 1380 C810 1405 850 1385 865 1340',
]
</script>

<style>
html, body { margin: 0; background: #3d3d3d; }
</style>

<style scoped>
.app {
  width: 1920px;
  height: 1152px;
  display: flex;
  flex-direction: column;
  overflow: hidden;
  background: #3d3d3d;
  color: #c6c6c6;
  font-family: Roboto, "Liberation Sans", sans-serif;
  font-size: 11px;
}
.spacer { flex: 1; }
svg { display: block; }
.ic14 { width: 14px; height: 14px; flex: none; }

.title {
  height: 23px;
  background: #04828a;
  color: #f2f2f2;
  font-size: 12px;
  display: flex;
  align-items: center;
  padding-left: 4px;
  flex: none;
}
.logo { width: 15px; height: 15px; margin-right: 5px; }
.win { width: 12px; height: 12px; }
.w-min { margin-right: 33px; }
.w-max { margin-right: 34px; }
.w-close { margin-right: 18px; }

.menu {
  height: 22px;
  flex: none;
  display: flex;
  align-items: center;
  gap: 13.1px;
  padding-left: 8px;
  font-size: 11.2px;
}
.lbl-node { margin-right: -7px; font-size: 11px; }
.select {
  background: #555;
  border-radius: 3px;
  height: 17px;
  line-height: 17px;
  padding-left: 7px;
  position: relative;
  box-sizing: border-box;
  font-size: 12px;
}
.sel-node { width: 164px; margin-right: 14px; }
.lbl-layout { margin-right: -9.5px; font-size: 11px; }
.sel-layout { width: 128px; margin-right: -6px; }
.menu-search { margin-right: 3px; }
.chev {
  position: absolute;
  right: 7px;
  top: 5px;
  width: 4px;
  height: 4px;
  border-right: 1px solid #ccc;
  border-bottom: 1px solid #ccc;
  transform: rotate(45deg);
}

.body { flex: 1; display: flex; min-height: 0; }
.left { width: 1370px; flex: none; display: flex; flex-direction: column; }

.toolbar {
  height: 34px;
  margin-top: 6px;
  margin-bottom: 4px;
  display: flex;
  padding-left: 8.5px;
  gap: 4px;
  position: relative;
  flex: none;
}
.grip {
  position: absolute;
  left: 2px;
  top: 4px;
  width: 3px;
  height: 26px;
  border-left: 1px dotted #777;
  border-right: 1px dotted #777;
}
.group {
  display: flex;
  background: #565656;
  border-radius: 3px;
  overflow: hidden;
  flex: none;
}
.group.far { margin-left: 8px; }
.btn {
  width: 35.5px;
  height: 34px;
  position: relative;
  border-right: 1px solid #4a4a4a;
  box-sizing: border-box;
}
.btn:last-child { border-right: 0; }
.btn:only-child { width: 34px; }
.btn svg { width: 33px; height: 33px; margin: 0 auto; }
.on { background: #82a2d2; }
.tri::after {
  content: "";
  position: absolute;
  right: 1px;
  bottom: 1px;
  border-style: solid;
  border-width: 0 0 6px 6px;
  border-color: transparent transparent #111 transparent;
}

.middle { flex: 1; display: flex; min-height: 0; }
.side {
  width: 36px;
  margin-right: 3px;
  flex: none;
  padding: 9px 0 0 1px;
  box-sizing: border-box;
  display: flex;
  flex-direction: column;
  gap: 1px;
  position: relative;
}
.grip-h {
  position: absolute;
  top: 2px;
  left: 3px;
  width: 28px;
  height: 3px;
  border-top: 1px dotted #777;
  border-bottom: 1px dotted #777;
}
.vgroup {
  background: #565656;
  border-radius: 3px;
  overflow: hidden;
  width: 34px;
  flex: none;
}
.vgroup.far { margin-top: 7px; }
.vbtn {
  height: 34.6px;
  position: relative;
  border-bottom: 1px solid #4a4a4a;
  box-sizing: border-box;
}
.vbtn:last-child { border-bottom: 0; }
.vbtn svg { width: 31px; height: 31px; margin: 2px auto 0; }
.vgroup:first-of-type { margin-bottom: 6px; }

.center { flex: 1; display: flex; flex-direction: column; min-width: 0; padding-right: 1px; }
.burger {
  width: 14px;
  display: flex;
  flex-direction: column;
  gap: 2px;
  flex: none;
}
.burger i { height: 2px; background: #a0a0a0; display: block; }

.vp-bar {
  height: 23px;
  flex: none;
  display: flex;
  align-items: center;
  gap: 13.6px;
  padding-left: 7px;
  padding-right: 1px;
  border-top: 1px solid #4b4b4b;
  border-left: 1px solid #4b4b4b;
  box-sizing: border-box;
}
.vp-bar .burger { margin-right: -4.4px; }
.vp-nav { width: 76px; height: 16px; }

.viewport {
  height: 801px;
  flex: none;
  position: relative;
  border: 1px solid #8c8c8c;
  box-sizing: border-box;
  overflow: hidden;
}
.scene { width: 100%; height: 100%; }
.gridline {
  fill: none;
  stroke: #5e5e5e;
  stroke-width: 1;
  vector-effect: non-scaling-stroke;
}
.vp-tag {
  position: absolute;
  color: #d4d4d4;
  font-size: 11px;
  background: rgba(60, 60, 60, 0.5);
  padding: 0 3px;
  line-height: 15px;
}
.tag-persp { left: 2px; top: 3px; }
.tag-cam { left: 613px; top: 3px; display: flex; align-items: center; gap: 2px; }
.cam-mini { width: 12px; height: 10px; }
.tag-grid { right: 9px; top: 782px; letter-spacing: .15px; }
.giz { position: absolute; font-size: 10px; line-height: 10px; }
.giz-y { left: 30px; top: 743px; color: #3fae68; }
.giz-z { left: 50px; top: 748px; color: #2f7fd0; }
.giz-x { left: 50px; top: 777px; color: #c93a40; }

.ruler-row { height: 33px; flex: none; display: flex; align-items: flex-start; }
.ruler { width: 1262px; height: 33px; flex: none; }
.ruler-num { fill: #bdbdbd; font-size: 11.5px; font-family: Roboto, "Liberation Sans", sans-serif; }

.field {
  background: #333;
  border: 1px solid #474747;
  border-radius: 3px;
  box-sizing: border-box;
  height: 18px;
  line-height: 16px;
  padding-left: 5px;
  position: relative;
  flex: none;
  font-size: 11px;
}
.spin {
  position: absolute;
  right: 4px;
  top: 3px;
  width: 5px;
  height: 4px;
  border-left: 1px solid transparent;
}
.spin::before, .spin::after {
  content: "";
  position: absolute;
  left: 0;
  width: 4px;
  height: 4px;
  border-left: 1px solid #888;
  border-top: 1px solid #888;
}
.spin::before { top: 0; transform: rotate(45deg); }
.spin::after { top: 6px; transform: rotate(225deg); }
.fld-end { width: 66px; margin-top: 7px; }

.ctrl-row { height: 26px; flex: none; display: flex; align-items: flex-start; position: relative; }
.grip-ctl { left: 1px; top: 4px; height: 18px; }
.fld-start { width: 67px; margin: 4px 7px 0 8px; }
.range {
  width: 634px;
  height: 17px;
  margin-top: 4px;
  flex: none;
  background: #5a5a5a;
  border-radius: 2px;
  display: flex;
  justify-content: space-between;
  align-items: center;
  padding: 0 4px;
  box-sizing: border-box;
  font-size: 11px;
}
.fld-stop { width: 66px; margin: 4px 14px 0 8px; }
.tgroup { height: 26px; }
.g-mid { margin-left: 12px; }
.tbtn {
  width: 27.6px;
  height: 26px;
  position: relative;
  border-right: 1px solid #4a4a4a;
  box-sizing: border-box;
}
.g-narrow .tbtn { width: 26px; }
.g-wide .tbtn { width: 28.3px; }
.tbtn:last-child { border-right: 0; }
.tbtn svg { width: 22px; height: 22px; margin: 2px auto 0; }
.tri.tbtn::after { border-width: 0 0 5px 5px; }

.bottom {
  height: 148px;
  margin-top: 4px;
  flex: none;
  display: flex;
  gap: 3px;
}
.panel { border: 1px solid #4b4b4b; box-sizing: border-box; }
.pbar {
  height: 23px;
  display: flex;
  align-items: center;
  gap: 14.2px;
  padding-left: 6px;
  border-bottom: 1px solid #4f4f4f;
  box-sizing: border-box;
}
.pbar .burger { margin-right: -4.2px; }
.materials { width: 1008px; flex: none; display: flex; flex-direction: column; }
.mat-body { padding: 2px 1px; }
.mat {
  width: 45px;
  height: 61px;
  background: #4c4c4c;
  padding: 2px 2px 0;
  box-sizing: border-box;
  overflow: hidden;
}
.mat-thumb { width: 41px; height: 42px; }
.mat-name { display: block; font-size: 11px; white-space: nowrap; line-height: 17px; }

.coords { flex: 1; min-width: 0; padding: 0 2px; }
.cbar { gap: 90px; color: #888; border-bottom: 1px solid #4f4f4f; height: 24px; padding-left: 2px; }
.cbar .burger { margin-right: -82px; }
.cgrid {
  display: grid;
  grid-template-columns: 7px 91px 11px 91px 13px 90px;
  column-gap: 1px;
  row-gap: 4px;
  padding: 7px 0 0 2px;
  align-items: center;
  font-size: 11px;
}
.cgrid label { color: #bbb; text-align: right; }
.cfield {
  height: 18px;
  line-height: 18px;
  background: #383838;
  border-radius: 3px;
  padding-left: 5px;
  color: #6d6d6d;
  position: relative;
}
.cdrop {
  height: 17px;
  line-height: 17px;
  background: #4b4b4b;
  border-radius: 2px;
  padding-left: 7px;
  color: #7c7c7c;
  position: relative;
  margin-top: 3px;
}
.apply {
  height: 17px;
  line-height: 17px;
  background: #5d5d5d;
  border-radius: 2px;
  text-align: center;
  color: #ddd;
  margin-top: 3px;
}

.status {
  height: 24px;
  flex: none;
  margin-top: 4px;
  border-top: 1px solid #4b4b4b;
  border-right: 1px solid #4b4b4b;
  display: flex;
  align-items: center;
  box-sizing: border-box;
  padding-left: 4px;
  gap: 12px;
  font-size: 11px;
}

.right { flex: 1; display: flex; padding: 5px 0 0 3px; min-width: 0; }
.docks { width: 524px; flex: none; display: flex; flex-direction: column; gap: 4px; }
.objects { height: 511px; flex: none; display: flex; flex-direction: column; }
.rbar { gap: 13.7px; padding-left: 5px; }
.rbar .burger { margin-right: -3.7px; }
.obj-tools { width: 74px; height: 16px; margin-right: 2px; }
.obj-table { flex: 1; display: flex; flex-direction: column; padding-top: 2px; }
.obj-row { height: 20.5px; display: flex; align-items: stretch; flex: none; }
.obj-row.sel { background: #464646; }
.obj-name {
  width: 173px;
  display: flex;
  align-items: center;
  gap: 2px;
  padding-left: 2px;
  box-sizing: border-box;
  border-right: 1px solid #333;
  flex: none;
  white-space: nowrap;
}
.obj-name.child { padding-left: 12px; }
.tree { width: 14px; height: 14px; flex: none; }
.obj-label { margin-left: 1px; }
.obj-name.child .obj-label { margin-left: 2px; }
.obj-flags {
  width: 40px;
  border-right: 1px solid #333;
  flex: none;
  display: flex;
  align-items: center;
  padding-left: 3px;
  gap: 4px;
  box-sizing: border-box;
}
.tagbox {
  width: 12px;
  height: 12px;
  background: #8c8c8c;
  border-radius: 1px;
  display: block;
  flex: none;
}
.tagbox.purple { background: #2a0b2c; }
.dots { display: flex; flex-direction: column; gap: 2px; }
.dots b { width: 5px; height: 5px; border-radius: 50%; background: #858585; display: block; }
.check { width: 10px; height: 8px; margin-left: -2px; }
.obj-rest { flex: 1; display: flex; }
.obj-rest i { display: block; box-sizing: border-box; border-right: 1px solid #333; flex: none; }
.obj-rest i:first-child { width: 173px; }
.obj-rest i:last-child { width: 40px; }

.layers { flex: 1; display: flex; flex-direction: column; border-bottom: 0; }
.layer-table { padding: 2px 1px 0; flex: 1; }
.layer-head {
  height: 18px;
  display: flex;
  align-items: center;
  border: 1px solid #4a4a4a;
  border-width: 1px 1px 0;
  box-sizing: border-box;
}
.lh-name { width: 168.5px; padding-left: 3px; box-sizing: border-box; flex: none; }
.lh-col { width: 18.1px; flex: none; border-left: 1px solid #4f4f4f; text-align: center; line-height: 17px; box-sizing: border-box; }
.lh-col:last-child { border-right: 1px solid #4f4f4f; }
.layer-row { height: 18px; background: #464646; display: flex; align-items: center; }
.lr-name { width: 172px; flex: none; display: flex; align-items: center; color: #ec8a32; white-space: nowrap; }
.lr-tree {
  width: 8px;
  height: 7px;
  margin: -6px 4px 0 11px;
  border-left: 1px solid #777;
  border-bottom: 1px solid #777;
  display: block;
}
.lr-box { margin-right: 6px; }
.lr-ic { width: 14px; height: 14px; margin: 0 2.05px; flex: none; }

.tabs { flex: 1; position: relative; display: flex; flex-direction: column; }
.tab-block { display: flex; flex-direction: column; height: 515px; color: #858585; }
.tab-block.lower { height: auto; }
.tab {
  writing-mode: vertical-rl;
  font-size: 11px;
  width: 23px;
  box-sizing: border-box;
  display: block;
  line-height: 20px;
  padding: 5px 3px 5px 0;
  margin-bottom: 2px;
  white-space: nowrap;
}
.tab.on {
  background: #484848;
  color: #c8c8c8;
  border-radius: 0 4px 4px 0;
}
.tab.tab-obj { padding-top: 8px; margin-bottom: 1px; }
</style>
